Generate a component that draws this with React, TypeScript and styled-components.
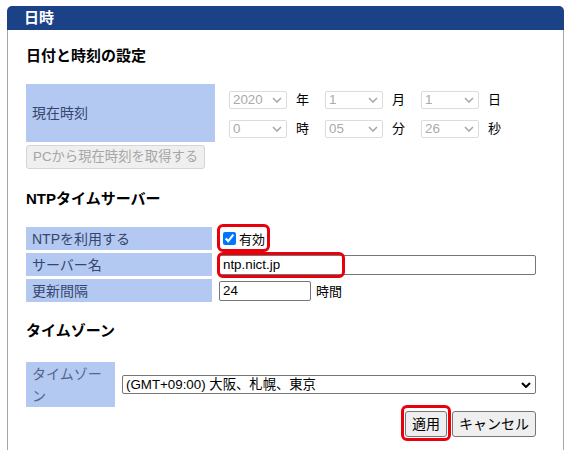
import React from 'react';
import styled, { createGlobalStyle } from 'styled-components';

const GlobalStyle = createGlobalStyle`
  html, body {
    margin: 0;
    padding: 0;
    background: #ffffff;
  }
  body {
    font-family: "Liberation Sans", "Noto Sans CJK JP", sans-serif;
    font-size: 14px;
    color: #000000;
  }
`;

const Panel = styled.section`
  margin: 6px 0 0 7px;
  width: 557px;
`;

const PanelHeader = styled.h1`
  margin: 0;
  height: 24px;
  line-height: 24px;
  padding-left: 17px;
  background: #1b4287;
  color: #ffffff;
  font-size: 15px;
  font-weight: bold;
  border-radius: 5px 5px 0 0;
`;

const PanelBody = styled.div`
  border-left: 1px solid #a6a6a6;
  border-right: 1px solid #a6a6a6;
  padding: 16px 27px 30px 18px;
`;

const SectionTitle = styled.h2<{ $top?: number }>`
  margin: ${p => p.$top ?? 0}px 0 0;
  font-size: 15px;
  line-height: 20px;
  font-weight: bold;
`;

const FormGrid = styled.div<{ $label: number; $top: number }>`
  display: grid;
  grid-template-columns: ${p => p.$label}px 1fr;
  column-gap: 7px;
  row-gap: 3px;
  margin-top: ${p => p.$top}px;
`;

const LabelCell = styled.div<{ $height?: number; $muted?: boolean }>`
  background: #b4c9f1;
  color: ${p => (p.$muted ? '#55658c' : '#34466f')};
  min-height: ${p => p.$height ?? 23}px;
  padding: 0 5px 0 6px;
  display: flex;
  align-items: center;
  line-height: 22px;
  font-size: 14px;
`;

const ValueCell = styled.div`
  position: relative;
  display: flex;
  align-items: center;
`;

const DateTimeCell = styled.div`
  display: flex;
  flex-direction: column;
  gap: 11px;
  padding: 7px 0 4px 7px;
`;

const PickerRow = styled.div`
  display: flex;
  align-items: center;
  height: 18px;
`;

const Unit = styled.span`
  width: 13px;
  margin: 0 16px 0 9px;
  font-size: 13px;
  line-height: 18px;
  white-space: nowrap;
`;

const SelectBox = styled.span<{ $width: number; $height: number }>`
  position: relative;
  display: inline-flex;
  width: ${p => p.$width}px;
  height: ${p => p.$height}px;
  flex: none;
`;

const NativeSelect = styled.select<{ $disabled?: boolean }>`
  appearance: none;
  width: 100%;
  height: 100%;
  margin: 0;
  box-sizing: border-box;
  padding: 0 18px 0 3px;
  border: 1px solid ${p => (p.$disabled ? '#dcdcdc' : '#767676')};
  border-radius: 2px;
  background: #ffffff;
  color: ${p => (p.$disabled ? '#a9a9a9' : '#000000')};
  font-family: "Liberation Sans", "Noto Sans CJK JP", sans-serif;
  font-size: 13.33px;
  line-height: 16px;
  opacity: 1;
`;

const Chevron = styled.svg`
  position: absolute;
  right: 5px;
  top: 50%;
  transform: translateY(-50%);
  pointer-events: none;
`;

const TextField = styled.input<{ $width: number }>`
  width: ${p => p.$width}px;
  height: 20px;
  box-sizing: border-box;
  margin: 0;
  padding: 0 3px;
  border: 1px solid #767676;
  border-radius: 2px;
  font-family: "Liberation Sans", "Noto Sans CJK JP", sans-serif;
  font-size: 13.33px;
  color: #000000;
`;

const CheckLabel = styled.label`
  display: flex;
  align-items: center;
  gap: 3px;
  margin-left: 4px;
  font-size: 13px;
`;

const CheckBox = styled.input`
  width: 13px;
  height: 13px;
  margin: 0;
  accent-color: #0075ff;
`;

const Suffix = styled.span`
  margin-left: 5px;
  font-size: 13px;
`;

const Button = styled.button<{ $small?: boolean }>`
  margin: 0;
  padding: 1px 6px;
  height: ${p => (p.$small ? 24 : 26)}px;
  border: 1px solid #767676;
  border-radius: 3px;
  background: #efefef;
  color: #000000;
  font-family: "Liberation Sans", "Noto Sans CJK JP", sans-serif;
  font-size: ${p => (p.$small ? '13.33px' : '14px')};
  line-height: 20px;
  white-space: nowrap;

  &:disabled {
    border-color: #d4d4d4;
    color: #a6a6a6;
  }
`;

const FetchRow = styled.div`
  margin-top: 3px;
`;

const ActionRow = styled.div`
  display: flex;
  justify-content: flex-end;
  gap: 5px;
  margin-top: 4px;
`;

const Marked = styled.span`
  position: relative;
  display: inline-flex;
`;

const Callout = styled.span<{ $t: number; $l: number; $w?: number; $h?: number; $r?: number; $b?: number }>`
  position: absolute;
  top: ${p => p.$t}px;
  left: ${p => p.$l}px;
  ${p => (p.$w !== undefined ? `width: ${p.$w}px;` : `right: ${p.$r}px;`)}
  ${p => (p.$h !== undefined ? `height: ${p.$h}px;` : `bottom: ${p.$b}px;`)}
  box-sizing: border-box;
  border: 3px solid #e8000b;
  border-radius: 6px;
  pointer-events: none;
`;

interface SelectProps {
  value: string;
  options: string[];
  width: number;
  height: number;
  disabled?: boolean;
}

const Select: React.FC<SelectProps> = ({ value, options, width, height, disabled }) => (
  <SelectBox $width={width} $height={height}>
    <NativeSelect $disabled={disabled} disabled={disabled} defaultValue={value}>
      {options.map(o => (
        <option key={o} value={o}>{o}</option>
      ))}
    </NativeSelect>
    <Chevron width="10" height="6" viewBox="0 0 10 6">
      <polyline
        points="1,1 5,5 9,1"
        fill="none"
        stroke={disabled ? '#a9a9a9' : '#000000'}
        strokeWidth={disabled ? 1.6 : 2}
      />
    </Chevron>
  </SelectBox>
);

const range = (from: number, to: number, pad = false) =>
  Array.from({ length: to - from + 1 }, (_, i) => {
    const n = from + i;
    return pad && n < 10 ? `0${n}` : String(n);
  });

const dateRow = [
  { value: '2020', options: range(2020, 2037), unit: '年' },
  { value: '1', options: range(1, 12), unit: '月' },
  { value: '1', options: range(1, 31), unit: '日' },
];

const timeRow = [
  { value: '0', options: range(0, 23), unit: '時' },
  { value: '05', options: range(0, 59, true), unit: '分' },
  { value: '26', options: range(0, 59, true), unit: '秒' },
];

const App: React.FC = () => (
  <>
    <GlobalStyle />
    <Panel>
      <PanelHeader>日時</PanelHeader>
      <PanelBody>
        <SectionTitle>日付と時刻の設定</SectionTitle>
        <FormGrid $label={189} $top={18}>
          <LabelCell $height={58}>現在時刻</LabelCell>
          <DateTimeCell>
            {[dateRow, timeRow].map((row, i) => (
              <PickerRow key={i}>
                {row.map(item => (
                  <React.Fragment key={item.unit}>
                    <Select value={item.value} options={item.options} width={58} height={18} disabled />
                    <Unit>{item.unit}</Unit>
                  </React.Fragment>
                ))}
              </PickerRow>
            ))}
          </DateTimeCell>
        </FormGrid>
        <FetchRow>
          <Button $small disabled>PCから現在時刻を取得する</Button>
        </FetchRow>

        <SectionTitle $top={20}>NTPタイムサーバー</SectionTitle>
        <FormGrid $label={186} $top={18}>
          <LabelCell>NTPを利用する</LabelCell>
          <ValueCell>
            <CheckLabel>
              <CheckBox type="checkbox" defaultChecked />
              有効
            </CheckLabel>
            <Callout $t={-3} $l={-2} $w={53} $h={28} />
          </ValueCell>
          <LabelCell>サーバー名</LabelCell>
          <ValueCell>
            <TextField $width={317} defaultValue="ntp.nict.jp" />
            <Callout $t={-1} $l={-2} $w={128} $h={26} />
          </ValueCell>
          <LabelCell>更新間隔</LabelCell>
          <ValueCell>
            <TextField $width={92} defaultValue="24" />
            <Suffix>時間</Suffix>
          </ValueCell>
        </FormGrid>

        <SectionTitle $top={19}>タイムゾーン</SectionTitle>
        <FormGrid $label={89} $top={21}>
          <LabelCell $height={45} $muted>タイムゾーン</LabelCell>
          <ValueCell>
            <Select
              value="(GMT+09:00) 大阪、札幌、東京"
              options={['(GMT+09:00) 大阪、札幌、東京']}
              width={414}
              height={19}
            />
          </ValueCell>
        </FormGrid>
        <ActionRow>
          <Marked>
            <Button>適用</Button>
            <Callout $t={-6} $l={-4} $r={-4} $b={-4} />
          </Marked>
          <Button>キャンセル</Button>
        </ActionRow>
      </PanelBody>
    </Panel>
  </>
);

export default App;
